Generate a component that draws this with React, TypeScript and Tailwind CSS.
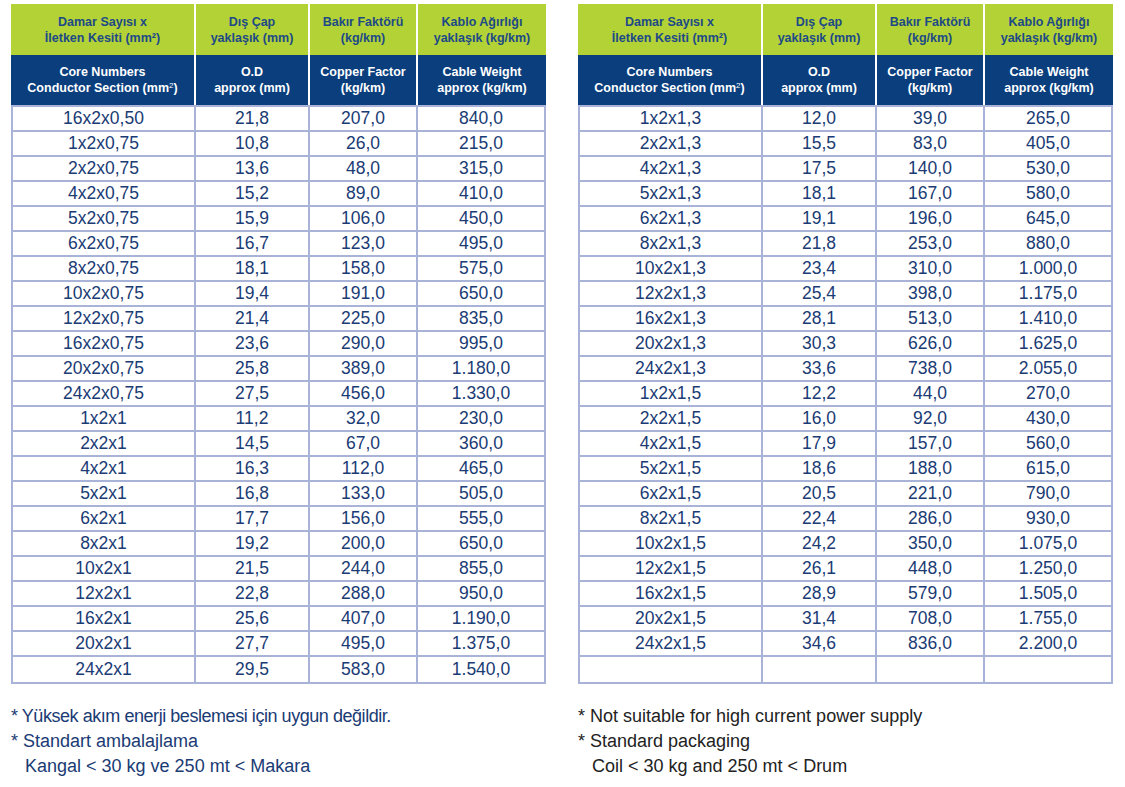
const left: string[][] = [
  ["16x2x0,50", "21,8", "207,0", "840,0"],
  ["1x2x0,75", "10,8", "26,0", "215,0"],
  ["2x2x0,75", "13,6", "48,0", "315,0"],
  ["4x2x0,75", "15,2", "89,0", "410,0"],
  ["5x2x0,75", "15,9", "106,0", "450,0"],
  ["6x2x0,75", "16,7", "123,0", "495,0"],
  ["8x2x0,75", "18,1", "158,0", "575,0"],
  ["10x2x0,75", "19,4", "191,0", "650,0"],
  ["12x2x0,75", "21,4", "225,0", "835,0"],
  ["16x2x0,75", "23,6", "290,0", "995,0"],
  ["20x2x0,75", "25,8", "389,0", "1.180,0"],
  ["24x2x0,75", "27,5", "456,0", "1.330,0"],
  ["1x2x1", "11,2", "32,0", "230,0"],
  ["2x2x1", "14,5", "67,0", "360,0"],
  ["4x2x1", "16,3", "112,0", "465,0"],
  ["5x2x1", "16,8", "133,0", "505,0"],
  ["6x2x1", "17,7", "156,0", "555,0"],
  ["8x2x1", "19,2", "200,0", "650,0"],
  ["10x2x1", "21,5", "244,0", "855,0"],
  ["12x2x1", "22,8", "288,0", "950,0"],
  ["16x2x1", "25,6", "407,0", "1.190,0"],
  ["20x2x1", "27,7", "495,0", "1.375,0"],
  ["24x2x1", "29,5", "583,0", "1.540,0"],
];

const right: string[][] = [
  ["1x2x1,3", "12,0", "39,0", "265,0"],
  ["2x2x1,3", "15,5", "83,0", "405,0"],
  ["4x2x1,3", "17,5", "140,0", "530,0"],
  ["5x2x1,3", "18,1", "167,0", "580,0"],
  ["6x2x1,3", "19,1", "196,0", "645,0"],
  ["8x2x1,3", "21,8", "253,0", "880,0"],
  ["10x2x1,3", "23,4", "310,0", "1.000,0"],
  ["12x2x1,3", "25,4", "398,0", "1.175,0"],
  ["16x2x1,3", "28,1", "513,0", "1.410,0"],
  ["20x2x1,3", "30,3", "626,0", "1.625,0"],
  ["24x2x1,3", "33,6", "738,0", "2.055,0"],
  ["1x2x1,5", "12,2", "44,0", "270,0"],
  ["2x2x1,5", "16,0", "92,0", "430,0"],
  ["4x2x1,5", "17,9", "157,0", "560,0"],
  ["5x2x1,5", "18,6", "188,0", "615,0"],
  ["6x2x1,5", "20,5", "221,0", "790,0"],
  ["8x2x1,5", "22,4", "286,0", "930,0"],
  ["10x2x1,5", "24,2", "350,0", "1.075,0"],
  ["12x2x1,5", "26,1", "448,0", "1.250,0"],
  ["16x2x1,5", "28,9", "579,0", "1.505,0"],
  ["20x2x1,5", "31,4", "708,0", "1.755,0"],
  ["24x2x1,5", "34,6", "836,0", "2.200,0"],
  ["", "", "", ""],
];

const cols = "grid grid-cols-[183px_114px_108px_130px]";

function CableTable({ rows }: { rows: string[][] }) {
  return (
    <div className="w-[535px]">
      <div className={`${cols} h-[51px] text-[12.5px] font-bold leading-[16px] text-[#1d4a86]`}>
        <div className="flex flex-col items-center justify-center bg-[#b3d236]">
          <span>Damar Sayısı x</span>
          <span>İletken Kesiti (mm²)</span>
        </div>
        <div className="flex flex-col items-center justify-center border-l-2 border-white bg-[#b3d236]">
          <span>Dış Çap</span>
          <span>yaklaşık (mm)</span>
        </div>
        <div className="flex flex-col items-center justify-center border-l-2 border-white bg-[#b3d236]">
          <span>Bakır Faktörü</span>
          <span>(kg/km)</span>
        </div>
        <div className="flex flex-col items-center justify-center border-l-2 border-white bg-[#b3d236]">
          <span>Kablo Ağırlığı</span>
          <span>yaklaşık (kg/km)</span>
        </div>
      </div>
      <div className={`${cols} h-[50px] text-[12.5px] font-bold leading-[16px] text-white`}>
        <div className="flex flex-col items-center justify-center bg-[#0a3e7d]">
          <span>Core Numbers</span>
          <span>
            Conductor Section (mm<sup className="text-[8px] font-normal">2</sup>)
          </span>
        </div>
        <div className="flex flex-col items-center justify-center border-l-2 border-white bg-[#0a3e7d]">
          <span>O.D</span>
          <span>approx (mm)</span>
        </div>
        <div className="flex flex-col items-center justify-center border-l-2 border-white bg-[#0a3e7d]">
          <span>Copper Factor</span>
          <span>(kg/km)</span>
        </div>
        <div className="flex flex-col items-center justify-center border-l-2 border-white bg-[#0a3e7d]">
          <span>Cable Weight</span>
          <span>approx (kg/km)</span>
        </div>
      </div>
      <div className="border-2 border-[#a9b3d8] text-[17.5px] text-[#1a3b74]">
        {rows.map((r, i) => (
          <div
            key={i}
            className={`grid grid-cols-[181px_114px_108px_128px] h-[25px] ${
              i < rows.length - 1 ? "border-b-2 border-[#a9b3d8]" : ""
            }`}
          >
            {r.map((v, j) => (
              <div
                key={j}
                className={`flex items-center justify-center leading-none ${
                  j > 0 ? "border-l-2 border-[#a9b3d8]" : ""
                }`}
              >
                {v}
              </div>
            ))}
          </div>
        ))}
      </div>
    </div>
  );
}

export default function App() {
  return (
    <div className="h-[787px] w-[1125px] bg-white pl-[11px] pt-[4px] font-['Liberation_Sans',Arial,sans-serif]">
      <div className="flex gap-[32px]">
        <CableTable rows={left} />
        <CableTable rows={right} />
      </div>
      <div className="mt-[20px] flex gap-[32px] text-[18px] leading-[25px]">
        <div className="w-[535px] text-[#1a3b74]">
          <p className="tracking-[-0.45px]">* Yüksek akım enerji beslemesi için uygun değildir.</p>
          <p>* Standart ambalajlama</p>
          <p className="pl-[14px]">Kangal &lt; 30 kg ve 250 mt &lt; Makara</p>
        </div>
        <div className="w-[535px] text-[#222222]">
          <p>* Not suitable for high current power supply</p>
          <p>* Standard packaging</p>
          <p className="pl-[14px]">Coil &lt; 30 kg and 250 mt &lt; Drum</p>
        </div>
      </div>
    </div>
  );
}
